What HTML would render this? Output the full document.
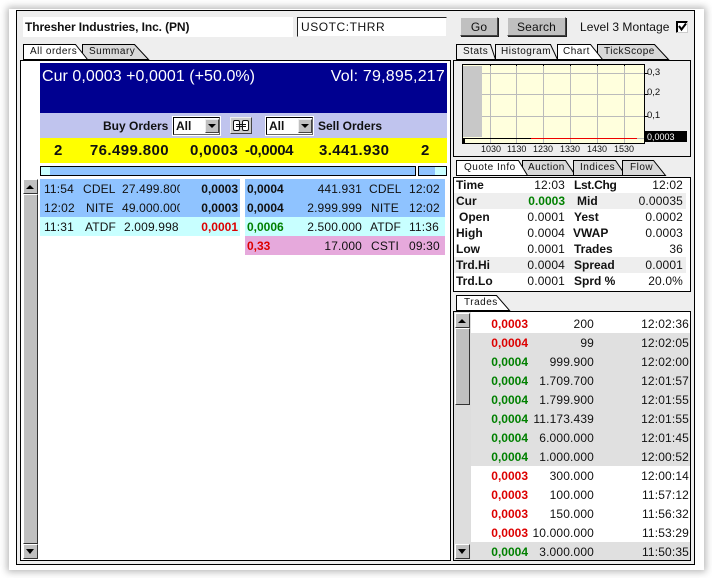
<!DOCTYPE html>
<html><head><meta charset="utf-8"><style>
html,body{margin:0;padding:0;background:#fff}
#p{position:relative;width:712px;height:578px;overflow:hidden;background:#fff;font-family:"Liberation Sans",sans-serif;color:#111}
#p div{position:absolute;box-sizing:border-box}
.t{white-space:nowrap;font-size:12px;letter-spacing:.15px;line-height:16px;height:16px}
.r{text-align:right}
.b{font-weight:bold;letter-spacing:0}
.g{color:#008000}.d{color:#dd0000}
.y{font-size:15px;line-height:18px;height:18px;letter-spacing:.4px;top:142px}
.c{font-size:9px;letter-spacing:0}
.tb{font-size:10px;letter-spacing:.5px;line-height:14px;height:14px;white-space:nowrap;color:#111}
.btn{background:#c0c0c0;border:1px solid;border-color:#eee #444 #444 #eee;box-shadow:1px 1px 0 #222}
.sc{background:#c0c0c0;border:1px solid;border-color:#fff #333 #333 #fff}
</style></head><body><div id="p">
<div style="left:9px;top:9px;width:695px;height:561px;background:#fff;box-shadow:0 0 7px 2px rgba(0,0,0,.28)"></div>
<div style="left:16px;top:10px;width:679px;height:555px;background:#eee;border:1px solid #000"></div>

<div style="left:23px;top:17px;width:270px;height:20px;background:#fff"></div>
<div class="t b" style="left:25px;top:19px;letter-spacing:-.1px">Thresher Industries, Inc. (PN)</div>
<div style="left:297px;top:17px;width:150px;height:20px;background:#fff;border:1px solid;border-color:#222 #eee #eee #222"></div>
<div class="t" style="left:301px;top:19px;letter-spacing:.55px">USOTC:THRR</div>
<div class="btn" style="left:460px;top:17px;width:38px;height:19px"></div>
<div class="t" style="left:460px;top:19px;width:38px;text-align:center">Go</div>
<div class="btn" style="left:507px;top:17px;width:59px;height:19px"></div>
<div class="t" style="left:507px;top:19px;width:59px;text-align:center">Search</div>
<div class="t" style="left:580px;top:19px;letter-spacing:.05px">Level 3 Montage</div>
<div style="left:676px;top:21px;width:12px;height:12px;background:#fff;border:1px solid #000;border-color:#000 #ccc #ccc #000;box-shadow:inset 1px 1px 0 #000"></div>

<svg style="position:absolute;left:0;top:0" width="712" height="578">
<g stroke="#000" stroke-width="1">
<path d="M82.5 59.5V44.500H134.500L148.500 59.500Z" fill="#d9d9d9"/>
<path d="M23.500 59.500V44.500H75.500L87.500 59.500Z" fill="#fff"/>
<path d="M456.500 59.500V44.500H490.500L495.500 59.500Z" fill="#eee"/>
<path d="M495.500 59.500V44.500H550.500L557.500 59.500Z" fill="#eee"/>
<path d="M597.500 59.500V44.500H654.500L668.500 59.500Z" fill="#d9d9d9"/>
<path d="M557.500 59.500V44.500H590.500L602.500 59.500Z" fill="#fff"/>
<path d="M522.500 175.500V160.500H565.500L575.500 175.500Z" fill="#d9d9d9"/>
<path d="M573.500 175.500V160.500H615.500L625.500 175.500Z" fill="#d9d9d9"/>
<path d="M622.500 175.500V160.500H653.500L665.500 175.500Z" fill="#d9d9d9"/>
<path d="M456.500 175.500V160.500H518.500L527.500 175.500Z" fill="#fff"/>
<path d="M456.500 310.500V295.500H496.500L509.500 310.500Z" fill="#fff"/>
</g>
</svg>
<div class="tb" style="left:30px;top:45px">All orders</div>
<div class="tb" style="left:89px;top:45px">Summary</div>
<div class="tb" style="left:463px;top:45px">Stats</div>
<div class="tb" style="left:501px;top:45px">Histogram</div>
<div class="tb" style="left:563px;top:45px">Chart</div>
<div class="tb" style="left:604px;top:45px">TickScope</div>
<div class="tb" style="left:464px;top:161px">Quote Info</div>
<div class="tb" style="left:528px;top:161px">Auction</div>
<div class="tb" style="left:580px;top:161px">Indices</div>
<div class="tb" style="left:630px;top:161px">Flow</div>
<div class="tb" style="left:464px;top:296px">Trades</div>

<!-- left panel -->
<div style="left:20px;top:60px;width:431px;height:501px;background:#fff;border:1px solid #000"></div>
<div style="left:40px;top:63px;width:407px;height:50px;background:#000090"></div>
<div class="t" style="left:42px;top:68px;color:#fff;font-size:16px;letter-spacing:.05px;line-height:18px;height:18px">Cur 0,0003 +0,0001 (+50.0%)</div>
<div class="t r" style="right:267px;top:68px;color:#fff;font-size:16px;letter-spacing:.2px;line-height:18px;height:18px">Vol: 79,895,217</div>
<div style="left:40px;top:113px;width:407px;height:25px;background:#c0c4ee"></div>
<div class="t b" style="left:103px;top:118px">Buy Orders</div>
<div class="t b" style="left:318px;top:118px">Sell Orders</div>
<div style="left:172px;top:116px;width:49px;height:20px;background:#fff"></div>
<div style="left:173px;top:117px;width:47px;height:18px;border:1px solid #000;border-color:#000 #666 #666 #000"></div>
<div class="t b" style="left:176px;top:118px">All</div>
<div class="btn" style="left:205px;top:119px;width:14px;height:14px;box-shadow:none"></div>
<svg style="position:absolute;left:205px;top:119px" width="14" height="14"><path d="M3 5H11L7 9Z" fill="#000"/></svg>
<div style="left:265px;top:116px;width:49px;height:20px;background:#fff"></div>
<div style="left:266px;top:117px;width:47px;height:18px;border:1px solid #000;border-color:#000 #666 #666 #000"></div>
<div class="t b" style="left:269px;top:118px">All</div>
<div class="btn" style="left:298px;top:119px;width:14px;height:14px;box-shadow:none"></div>
<svg style="position:absolute;left:298px;top:119px" width="14" height="14"><path d="M3 5H11L7 9Z" fill="#000"/></svg>
<div class="btn" style="left:230px;top:117px;width:22px;height:17px;box-shadow:none;background:#ccc"></div>
<svg style="position:absolute;left:232px;top:119px" width="18" height="13" fill="#fff" stroke="#111"><rect x="1.500" y="1.500" width="6" height="10" rx="1.500"/><rect x="10.500" y="1.500" width="6" height="10" rx="1.500"/><path d="M4 5.500H14M4 7.500H14"/></svg>

<div style="left:40px;top:138px;width:407px;height:25px;background:#ffff00"></div>
<div class="t b y" style="left:54px">2</div>
<div class="t b r y" style="right:543px">76.499.800</div>
<div class="t b y" style="left:190px">0,0003</div>
<div class="t b y" style="left:245px;letter-spacing:-.4px">-0,0004</div>
<div class="t b y" style="left:319px">3.441.930</div>
<div class="t b y" style="left:421px">2</div>

<div style="left:40px;top:166px;width:376px;height:10px;background:#8fc3ff;border:1px solid #000"></div>
<div style="left:41px;top:167px;width:9px;height:8px;background:#c8ffff"></div>
<div style="left:418px;top:166px;width:29px;height:10px;background:#8fc3ff;border:1px solid #000"></div>
<div style="left:435px;top:167px;width:11px;height:8px;background:#c8ffff"></div>

<!-- left scrollbar -->
<div style="left:23px;top:179px;width:15px;height:380px;background:#ddd;border-right:1px solid #000"></div>
<div class="sc" style="left:23px;top:179px;width:15px;height:15px"></div>
<svg style="position:absolute;left:23px;top:179px" width="15" height="15"><path d="M3 10H11L7 6Z" fill="#000"/></svg>
<div class="sc" style="left:23px;top:194px;width:15px;height:350px"></div>
<div class="sc" style="left:23px;top:544px;width:15px;height:15px"></div>
<svg style="position:absolute;left:23px;top:544px" width="15" height="15"><path d="M3 5H11L7 10Z" fill="#000"/></svg>

<!-- buy rows -->
<div style="left:40px;top:179px;width:200px;height:38px;background:#8fc3ff"></div>
<div style="left:40px;top:217px;width:200px;height:19px;background:#c8ffff"></div>
<div class="t" style="left:44px;top:181px">11:54</div><div class="t" style="left:83px;top:181px">CDEL</div>
<div class="t" style="left:122px;top:181px;width:58px;overflow:hidden">27.499.800</div><div class="t b r" style="right:474px;top:181px">0,0003</div>
<div class="t" style="left:44px;top:200px">12:02</div><div class="t" style="left:86px;top:200px">NITE</div>
<div class="t" style="left:122px;top:200px;width:58px;overflow:hidden">49.000.000</div><div class="t b r" style="right:474px;top:200px">0,0003</div>
<div class="t" style="left:44px;top:219px">11:31</div><div class="t" style="left:85px;top:219px">ATDF</div>
<div class="t" style="left:124px;top:219px;width:56px;overflow:hidden">2.009.998</div><div class="t b r d" style="right:474px;top:219px">0,0001</div>

<!-- sell rows -->
<div style="left:245px;top:179px;width:200px;height:38px;background:#8fc3ff"></div>
<div style="left:245px;top:217px;width:200px;height:19px;background:#c8ffff"></div>
<div style="left:245px;top:236px;width:200px;height:19px;background:#e6a9dc"></div>
<div class="t b" style="left:247px;top:181px">0,0004</div><div class="t r" style="right:350px;top:181px">441.931</div><div class="t" style="left:369px;top:181px">CDEL</div><div class="t" style="left:409px;top:181px">12:02</div>
<div class="t b" style="left:247px;top:200px">0,0004</div><div class="t r" style="right:350px;top:200px">2.999.999</div><div class="t" style="left:371px;top:200px">NITE</div><div class="t" style="left:409px;top:200px">12:02</div>
<div class="t b g" style="left:247px;top:219px">0,0006</div><div class="t r" style="right:350px;top:219px">2.500.000</div><div class="t" style="left:370px;top:219px">ATDF</div><div class="t" style="left:409px;top:219px">11:36</div>
<div class="t b d" style="left:247px;top:238px">0,33</div><div class="t r" style="right:350px;top:238px">17.000</div><div class="t" style="left:371px;top:238px">CSTI</div><div class="t" style="left:409px;top:238px">09:30</div>

<!-- chart panel -->
<div style="left:453px;top:60px;width:238px;height:97px;background:#eee;border:1px solid #000"></div>
<svg style="position:absolute;left:462px;top:64px" width="230" height="92">
<rect x=".5" y=".5" width="182" height="79" fill="#ffffdd" stroke="#000"/>
<g stroke="#bbb"><path d="M28.500 1V79M54.500 1V79M81.500 1V79M108.500 1V79M135.500 1V79M162.500 1V79M1 9.500H182M1 30.500H182M1 52.500H182"/></g>
<rect x="1" y="2" width="19" height="71" fill="#c8c8c8"/>
<path d="M1 74.500H69" stroke="#000"/><path d="M69 74.500H175" stroke="#ee0000"/><path d="M175 74.500H182" stroke="#bbb"/>
<path d="M1 75V79H3V75Z" fill="#000"/>
<path d="M28.500 0V2M54.500 0V2M81.500 0V2M108.500 0V2M135.500 0V2M162.500 0V2M183 9.500H186M183 30.500H186M183 52.500H186" stroke="#000"/>
<rect x="182" y="67" width="43" height="11" fill="#000"/>
</svg>
<div class="t c" style="left:647px;top:65px;font-size:9.500px">0,3</div>
<div class="t c" style="left:647px;top:85px;font-size:9.500px">0,2</div>
<div class="t c" style="left:647px;top:108px;font-size:9.500px">0,1</div>
<div class="t c" style="left:647px;top:129px;color:#fff">0,0003</div>
<div class="t c" style="left:481px;top:141px">1030</div>
<div class="t c" style="left:507px;top:141px">1130</div>
<div class="t c" style="left:533px;top:141px">1230</div>
<div class="t c" style="left:560px;top:141px">1330</div>
<div class="t c" style="left:587px;top:141px">1430</div>
<div class="t c" style="left:614px;top:141px">1530</div>

<!-- quote panel -->
<div style="left:453px;top:177px;width:238px;height:115px;background:#fff;border:1px solid #000"></div>
<div style="left:454px;top:193px;width:232px;height:16px;background:#eee"></div>
<div style="left:454px;top:257px;width:232px;height:16px;background:#eee"></div>
<div class="t b" style="left:456px;top:177px">Time</div><div class="t r" style="right:147px;top:177px">12:03</div><div class="t b" style="left:574px;top:177px;letter-spacing:-.3px">Lst.Chg</div><div class="t r" style="right:29px;top:177px">12:02</div>
<div class="t b" style="left:456px;top:193px">Cur</div><div class="t b g r" style="right:147px;top:193px">0.0003</div><div class="t b" style="left:577px;top:193px">Mid</div><div class="t r" style="right:29px;top:193px">0.00035</div>
<div class="t b" style="left:459px;top:209px">Open</div><div class="t r" style="right:147px;top:209px">0.0001</div><div class="t b" style="left:574px;top:209px">Yest</div><div class="t r" style="right:29px;top:209px">0.0002</div>
<div class="t b" style="left:456px;top:225px">High</div><div class="t r" style="right:147px;top:225px">0.0004</div><div class="t b" style="left:573px;top:225px">VWAP</div><div class="t r" style="right:29px;top:225px">0.0003</div>
<div class="t b" style="left:456px;top:241px">Low</div><div class="t r" style="right:147px;top:241px">0.0001</div><div class="t b" style="left:574px;top:241px">Trades</div><div class="t r" style="right:29px;top:241px">36</div>
<div class="t b" style="left:456px;top:257px">Trd.Hi</div><div class="t r" style="right:147px;top:257px">0.0004</div><div class="t b" style="left:574px;top:257px">Spread</div><div class="t r" style="right:29px;top:257px">0.0001</div>
<div class="t b" style="left:456px;top:273px">Trd.Lo</div><div class="t r" style="right:147px;top:273px">0.0001</div><div class="t b" style="left:574px;top:273px">Sprd %</div><div class="t r" style="right:29px;top:273px">20.0%</div>

<!-- trades panel -->
<div style="left:453px;top:311px;width:238px;height:250px;background:#fff;border:1px solid #000"></div>
<div style="left:454px;top:312px;width:17px;height:248px;background:#ddd"></div>
<div style="left:471px;top:333px;width:219px;height:133px;background:#e0e0e0"></div>
<div style="left:471px;top:542px;width:219px;height:18px;background:#e0e0e0"></div>
<div class="sc" style="left:455px;top:313px;width:15px;height:15px"></div>
<svg style="position:absolute;left:455px;top:313px" width="15" height="15"><path d="M3 10H11L7 6Z" fill="#000"/></svg>
<div class="sc" style="left:455px;top:328px;width:15px;height:77px"></div>
<div class="sc" style="left:455px;top:544px;width:15px;height:15px"></div>
<svg style="position:absolute;left:455px;top:544px" width="15" height="15"><path d="M3 5H11L7 10Z" fill="#000"/></svg>

<div class="t b d r" style="right:184px;top:316px">0,0003</div><div class="t r" style="right:118px;top:316px">200</div><div class="t r" style="right:23px;top:316px">12:02:36</div>
<div class="t b d r" style="right:184px;top:335px">0,0004</div><div class="t r" style="right:118px;top:335px">99</div><div class="t r" style="right:23px;top:335px">12:02:05</div>
<div class="t b g r" style="right:184px;top:354px">0,0004</div><div class="t r" style="right:118px;top:354px">999.900</div><div class="t r" style="right:23px;top:354px">12:02:00</div>
<div class="t b g r" style="right:184px;top:373px">0,0004</div><div class="t r" style="right:118px;top:373px">1.709.700</div><div class="t r" style="right:23px;top:373px">12:01:57</div>
<div class="t b g r" style="right:184px;top:392px">0,0004</div><div class="t r" style="right:118px;top:392px">1.799.900</div><div class="t r" style="right:23px;top:392px">12:01:55</div>
<div class="t b g r" style="right:184px;top:411px">0,0004</div><div class="t r" style="right:118px;top:411px">11.173.439</div><div class="t r" style="right:23px;top:411px">12:01:55</div>
<div class="t b g r" style="right:184px;top:430px">0,0004</div><div class="t r" style="right:118px;top:430px">6.000.000</div><div class="t r" style="right:23px;top:430px">12:01:45</div>
<div class="t b g r" style="right:184px;top:449px">0,0004</div><div class="t r" style="right:118px;top:449px">1.000.000</div><div class="t r" style="right:23px;top:449px">12:00:52</div>
<div class="t b d r" style="right:184px;top:468px">0,0003</div><div class="t r" style="right:118px;top:468px">300.000</div><div class="t r" style="right:23px;top:468px">12:00:14</div>
<div class="t b d r" style="right:184px;top:487px">0,0003</div><div class="t r" style="right:118px;top:487px">100.000</div><div class="t r" style="right:23px;top:487px">11:57:12</div>
<div class="t b d r" style="right:184px;top:506px">0,0003</div><div class="t r" style="right:118px;top:506px">150.000</div><div class="t r" style="right:23px;top:506px">11:56:32</div>
<div class="t b d r" style="right:184px;top:525px">0,0003</div><div class="t r" style="right:118px;top:525px">10.000.000</div><div class="t r" style="right:23px;top:525px">11:53:29</div>
<div class="t b g r" style="right:184px;top:544px">0,0004</div><div class="t r" style="right:118px;top:544px">3.000.000</div><div class="t r" style="right:23px;top:544px">11:50:35</div>

<svg style="position:absolute;left:676px;top:21px" width="12" height="12"><path d="M3 5L5.500 8.500L10 2.500" fill="none" stroke="#000" stroke-width="2"/></svg>
</div></body></html>
